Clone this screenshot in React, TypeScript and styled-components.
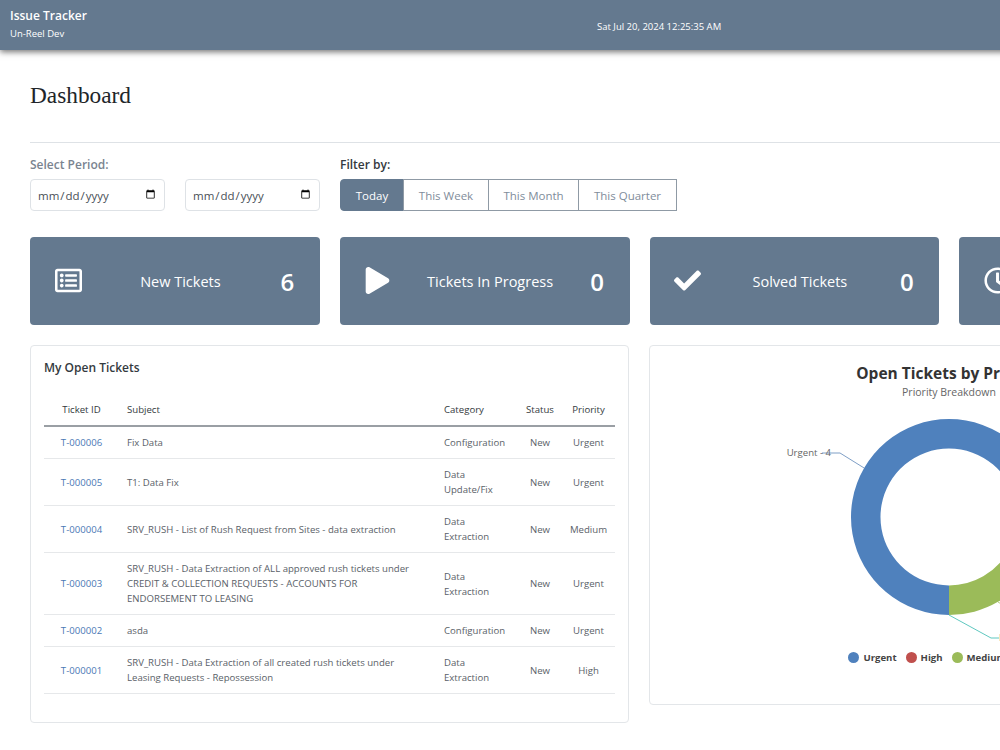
import React from "react";
import styled, { createGlobalStyle } from "styled-components";
import { FaRegListAlt, FaPlay, FaCheck, FaRegClock } from "react-icons/fa";

const SLATE = "#64798f";
const FONT = `"Open Sans", "Noto Sans", "Liberation Sans", sans-serif`;

const Global = createGlobalStyle`
  html, body { margin: 0; padding: 0; background: #fff; width: 1000px; height: 750px; overflow: hidden; }
  #root { width: 1000px; height: 750px; overflow: hidden; }
  * { box-sizing: border-box; }
`;

const Page = styled.div`
  width: 1279px;
  font-family: ${FONT};
  color: #495057;
`;

const TopBar = styled.header`
  height: 50px;
  background: ${SLATE};
  box-shadow: 0 2px 6px rgba(0, 0, 0, 0.55);
  color: #fff;
  display: grid;
  grid-template-columns: 587px auto;
  align-items: center;
  padding-left: 10px;
`;

const Brand = styled.div`
  display: flex;
  flex-direction: column;
  gap: 3px;
  margin-top: -2px;
`;

const BrandName = styled.div`
  font-size: 12px;
  font-weight: 600;
  line-height: 16px;
`;

const BrandSub = styled.div`
  font-size: 9.5px;
  line-height: 13px;
`;

const Clock = styled.div`
  font-size: 9.5px;
  margin-top: 2px;
`;

const Main = styled.main`
  padding: 0 30px;
`;

const Title = styled.h1`
  font-family: "Liberation Serif", serif;
  font-weight: 400;
  font-size: 23.3px;
  line-height: 28px;
  color: #212529;
  margin: 31px 0 33px;
`;

const Rule = styled.hr`
  border: 0;
  border-top: 1px solid #dee2e6;
  margin: 0 0 13px;
`;

const Filters = styled.section`
  display: flex;
  gap: 20px;
`;

const FilterGroup = styled.div`
  display: flex;
  flex-direction: column;
  gap: 5px;
`;

const FilterLabel = styled.div<{ $muted?: boolean }>`
  font-size: 12px;
  font-weight: 600;
  line-height: 18px;
  color: ${(p) => (p.$muted ? "#7a8490" : "#343a40")};
`;

const DateRow = styled.div`
  display: flex;
  gap: 20px;
`;

const DateInput = styled.input`
  width: 135px;
  height: 32px;
  padding: 0 6px;
  border: 1px solid #dee2e6;
  border-radius: 4px;
  background: #fff;
  font-family: ${FONT};
  font-size: 11.5px;
  color: #495057;
`;

const Segments = styled.div`
  display: flex;
  height: 32px;
`;

const Segment = styled.div<{ $active?: boolean; $w: number }>`
  width: ${(p) => p.$w}px;
  display: flex;
  align-items: center;
  justify-content: center;
  font-size: 11.5px;
  margin-left: -1px;
  border: 1px solid ${(p) => (p.$active ? SLATE : "#8f9aa5")};
  background: ${(p) => (p.$active ? SLATE : "#fff")};
  color: ${(p) => (p.$active ? "#fff" : "#7f8d9b")};
  &:first-child {
    margin-left: 0;
    border-radius: 4px 0 0 4px;
  }
`;

const Stats = styled.section`
  display: grid;
  grid-template-columns: repeat(4, 1fr);
  gap: 20px;
  margin-top: 26px;
`;

const StatCard = styled.div`
  height: 88px;
  background: ${SLATE};
  border-radius: 4px;
  color: #fff;
  display: grid;
  grid-template-columns: 76px 1fr 65px;
  align-items: center;
  justify-items: center;
`;

const StatIcon = styled.div`
  display: flex;
  font-size: 27px;
  margin-top: -2px;
`;

const StatLabel = styled.div`
  font-size: 14.5px;
  white-space: nowrap;
`;

const StatValue = styled.div`
  font-size: 24px;
  font-weight: 600;
`;

const Panels = styled.section`
  display: grid;
  grid-template-columns: 1fr 1fr;
  gap: 20px;
  margin-top: 20px;
  align-items: start;
`;

const Panel = styled.div<{ $h: number }>`
  height: ${(p) => p.$h}px;
  border: 1px solid #e3e6e9;
  border-radius: 4px;
  background: #fff;
`;

const TablePanel = styled(Panel)`
  padding: 13px 13px 0;
`;

const PanelTitle = styled.div`
  font-size: 12px;
  font-weight: 600;
  line-height: 18px;
  color: #343a40;
  margin-bottom: 17px;
`;

const Table = styled.table`
  width: 571px;
  table-layout: fixed;
  border-collapse: collapse;
  font-size: 9.6px;
  line-height: 15px;
`;

const Head = styled.th<{ $w: number; $center?: boolean }>`
  width: ${(p) => p.$w}px;
  padding: 8px 8px 8px;
  font-weight: 500;
  color: #343a40;
  text-align: ${(p) => (p.$center ? "center" : "left")};
  border-bottom: 2px solid #9a9fa4;
  white-space: nowrap;
  overflow: visible;
`;

const Row = styled.tr`
  border-bottom: 1px solid #e6e8ea;
`;

const Cell = styled.td<{ $center?: boolean }>`
  padding: 8px;
  color: #5a6168;
  vertical-align: middle;
  text-align: ${(p) => (p.$center ? "center" : "left")};
`;

const NarrowCell = styled(Cell)`
  padding: 8px 2px;
`;

const TicketLink = styled.a`
  color: #4a78b5;
  text-decoration: none;
`;

const ChartPanel = styled(Panel)`
  display: flex;
  flex-direction: column;
  align-items: center;
  padding-top: 16px;
`;

const ChartTitle = styled.div`
  font-size: 15.5px;
  font-weight: 700;
  line-height: 22px;
  color: #333;
`;

const ChartSub = styled.div`
  font-size: 10.5px;
  line-height: 16px;
  color: #666;
`;

const ChartSvg = styled.svg`
  display: block;
  margin-top: 19px;
  font-family: ${FONT};
`;

const Legend = styled.div`
  display: flex;
  gap: 9px;
  margin-top: 6px;
`;

const LegendItem = styled.div`
  display: flex;
  align-items: center;
  gap: 4px;
  font-size: 9.6px;
  font-weight: 700;
  color: #444;
`;

const Dot = styled.span<{ $c: string }>`
  width: 11px;
  height: 11px;
  border-radius: 50%;
  background: ${(p) => p.$c};
`;

const rows = [
  ["T-000006", "Fix Data", "Configuration", "New", "Urgent"],
  ["T-000005", "T1: Data Fix", "Data Update/Fix", "New", "Urgent"],
  ["T-000004", "SRV_RUSH - List of Rush Request from Sites - data extraction", "Data Extraction", "New", "Medium"],
  ["T-000003", "SRV_RUSH - Data Extraction of ALL approved rush tickets under CREDIT & COLLECTION REQUESTS - ACCOUNTS FOR ENDORSEMENT TO LEASING", "Data Extraction", "New", "Urgent"],
  ["T-000002", "asda", "Configuration", "New", "Urgent"],
  ["T-000001", "SRV_RUSH - Data Extraction of all created rush tickets under Leasing Requests - Repossession", "Data Extraction", "New", "High"],
];

const stats = [
  { icon: <FaRegListAlt />, label: "New Tickets", value: 6 },
  { icon: <FaPlay />, label: "Tickets In Progress", value: 0 },
  { icon: <FaCheck />, label: "Solved Tickets", value: 0 },
  { icon: <FaRegClock />, label: "Overdue Tickets", value: 0 },
];

const slices = [
  { from: 180, to: 420, color: "#4f81bd" },
  { from: 60, to: 120, color: "#c0504d" },
  { from: 120, to: 180, color: "#9bbb59" },
];

const CX = 299;
const CY = 98;
const R = 98;
const r = 68.5;

function pt(rad: number, deg: number) {
  const a = (deg * Math.PI) / 180;
  return `${(CX + rad * Math.sin(a)).toFixed(2)} ${(CY - rad * Math.cos(a)).toFixed(2)}`;
}

function arc(from: number, to: number) {
  const large = to - from > 180 ? 1 : 0;
  return `M${pt(R, from)} A${R} ${R} 0 ${large} 1 ${pt(R, to)} L${pt(r, to)} A${r} ${r} 0 ${large} 0 ${pt(r, from)} Z`;
}

export default function App() {
  return (
    <>
      <Global />
      <Page>
        <TopBar>
          <Brand>
            <BrandName>Issue Tracker</BrandName>
            <BrandSub>Un-Reel Dev</BrandSub>
          </Brand>
          <Clock>Sat Jul 20, 2024 12:25:35 AM</Clock>
        </TopBar>
        <Main>
          <Title>Dashboard</Title>
          <Rule />
          <Filters>
            <FilterGroup>
              <FilterLabel $muted>Select Period:</FilterLabel>
              <DateRow>
                <DateInput type="date" />
                <DateInput type="date" />
              </DateRow>
            </FilterGroup>
            <FilterGroup>
              <FilterLabel>Filter by:</FilterLabel>
              <Segments>
                <Segment $active $w={64}>Today</Segment>
                <Segment $w={86}>This Week</Segment>
                <Segment $w={91}>This Month</Segment>
                <Segment $w={99}>This Quarter</Segment>
              </Segments>
            </FilterGroup>
          </Filters>
          <Stats>
            {stats.map((s) => (
              <StatCard key={s.label}>
                <StatIcon>{s.icon}</StatIcon>
                <StatLabel>{s.label}</StatLabel>
                <StatValue>{s.value}</StatValue>
              </StatCard>
            ))}
          </Stats>
          <Panels>
            <TablePanel $h={378}>
              <PanelTitle>My Open Tickets</PanelTitle>
              <Table>
                <thead>
                  <tr>
                    <Head $w={75} $center>Ticket ID</Head>
                    <Head $w={317}>Subject</Head>
                    <Head $w={82}>Category</Head>
                    <Head $w={44} $center>Status</Head>
                    <Head $w={53} $center>Priority</Head>
                  </tr>
                </thead>
                <tbody>
                  {rows.map((row) => (
                    <Row key={row[0]}>
                      <Cell $center><TicketLink href="#">{row[0]}</TicketLink></Cell>
                      <Cell>{row[1]}</Cell>
                      <Cell>{row[2]}</Cell>
                      <NarrowCell $center>{row[3]}</NarrowCell>
                      <NarrowCell $center>{row[4]}</NarrowCell>
                    </Row>
                  ))}
                </tbody>
              </Table>
            </TablePanel>
            <ChartPanel $h={360}>
              <ChartTitle>Open Tickets by Priority</ChartTitle>
              <ChartSub>Priority Breakdown</ChartSub>
              <ChartSvg width={598} height={226} viewBox="0 0 598 226">
                {slices.map((s) => (
                  <path key={s.from} d={arc(s.from, s.to)} fill={s.color} />
                ))}
                <polyline points={`${pt(R, 300)} 190 34 172 34`} fill="none" stroke="#7f9fc6" />
                <text x={181} y={37} textAnchor="end" fontSize="9.6" fill="#666">Urgent - 4</text>
                <polyline points="348 183 372 198 380 198" fill="none" stroke="#b5cc85" />
                <polyline points={`${CX} ${CY + R} 341 219 349 219`} fill="none" stroke="#5fc8c0" />
                <text x={349} y={222} fontSize="9.6" fill="#666">Low - 0</text>
              </ChartSvg>
              <Legend>
                <LegendItem><Dot $c="#4f81bd" />Urgent</LegendItem>
                <LegendItem><Dot $c="#c0504d" />High</LegendItem>
                <LegendItem><Dot $c="#9bbb59" />Medium</LegendItem>
                <LegendItem><Dot $c="#4bacc6" />Low</LegendItem>
              </Legend>
            </ChartPanel>
          </Panels>
        </Main>
      </Page>
    </>
  );
}
